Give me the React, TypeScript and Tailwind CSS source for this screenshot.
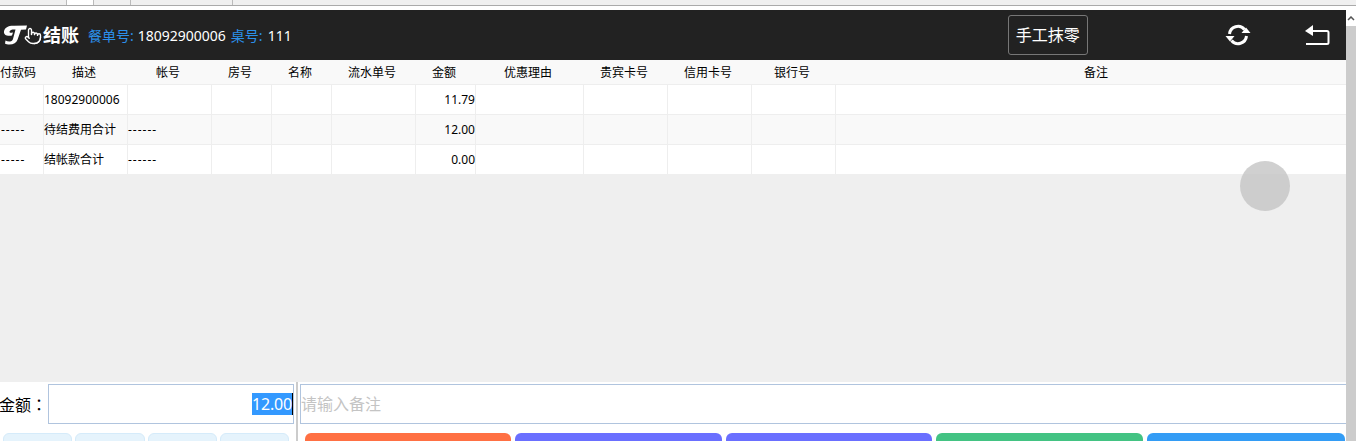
import { Pointer } from 'lucide-react'

const font = "font-['Noto_Sans','Noto_Sans_CJK_SC',sans-serif]"

const columns = [
    { title: '付款码', width: 'w-[44px]', head: 'pr-[8px]' },
    { title: '描述', width: 'w-[84px]', head: 'pr-[4px]' },
    { title: '帐号', width: 'w-[84px]', head: 'pr-[4px]' },
    { title: '房号', width: 'w-[60px]', head: 'pr-[4px]' },
    { title: '名称', width: 'w-[60px]', head: 'pr-[4px]' },
    { title: '流水单号', width: 'w-[84px]', head: 'pr-[4px]' },
    { title: '金额', width: 'w-[60px]', head: 'pr-[4px]' },
    { title: '优惠理由', width: 'w-[108px]', head: 'pr-[4px]' },
    { title: '贵宾卡号', width: 'w-[84px]', head: 'pr-[4px]' },
    { title: '信用卡号', width: 'w-[84px]', head: 'pr-[4px]' },
    { title: '银行号', width: 'w-[84px]', head: 'pr-[4px]' },
    { title: '备注', width: 'flex-1', head: 'pl-[10px]' },
]

const rows = [
    { cells: ['', '18092900006', '', '', '', '', '11.79'], bg: 'bg-white' },
    { cells: ['-----', '待结费用合计', '------', '', '', '', '12.00'], bg: 'bg-[#f9f9f9]' },
    { cells: ['-----', '结帐款合计', '------', '', '', '', '0.00'], bg: 'bg-white' },
]

const actionColors = [
    { color: 'bg-[#ff7043]', width: 'w-[206px]' },
    { color: 'bg-[#6a6fff]', width: 'w-[207px]' },
    { color: 'bg-[#6a6fff]', width: 'w-[206px]' },
    { color: 'bg-[#43c383]', width: 'w-[207px]' },
    { color: 'bg-[#339cf5]', width: 'w-[198px]' },
]

export default function App() {
    return (
        <div className={`relative h-[441px] w-[1356px] overflow-hidden bg-white ${font}`}>
            {/* browser tab strip */}
            <div className="flex h-[5px] bg-[#f0f0f0]">
                <div className="ml-[66px] w-[28px] border-x border-[#bbb] bg-white" />
                <div className="ml-[36px] w-[103px] border-x border-[#bbb]" />
            </div>
            <div className="h-[1px] bg-[#aaa]" />
            <div className="flex h-[435px]">
                <main className="flex w-[1346px] flex-col pt-[4px]">
                    <header className="flex h-[50px] shrink-0 items-center bg-[#222] text-white">
                        <svg width="24" height="20" viewBox="0 0 24 20" className="ml-[3px]" fill="white">
                            <path d="M1 6.500C1.500 2.500 6 .5 11 .8L24 .5l-1 4-5 .3-3.500 10c-1 3-4 4.700-8 4.700-2 0-3.500-.4-4.500-1l.5-3c1.500.8 3 1.200 4.500 1 1.500-.2 2.500-1 3-2.500L12.500 4.500c-3-.3-5.500.3-6 2-.2 1 .6 1.500 2 1.300l1.500-.3-1 3C4 11.300.5 10 1 6.500z" />
                        </svg>
                        <Pointer size={18} strokeWidth={1.800} className="-ml-[3px] mt-[1px]" />
                        <span className="ml-[1px] text-[18px] font-bold">结账</span>
                        <span className="ml-[9px] text-[14px] text-[#2b90ea]">餐单号:</span>
                        <span className="ml-[4px] text-[14px]">18092900006</span>
                        <span className="ml-[5px] text-[14px] text-[#2b90ea]">桌号:</span>
                        <span className="ml-[5px] text-[14px]">111</span>
                        <button className="ml-[716px] h-[40px] w-[80px] rounded-[3px] border border-[#777] text-[16px]">
                            手工抹零
                        </button>
                        <svg width="26" height="24" viewBox="0 0 26 24" className="ml-[137px]" fill="none" stroke="white" strokeWidth="3">
                            <path d="M4.500 11a8.500 8.500 0 0 1 15-4.500" />
                            <path d="M21.500 13a8.500 8.500 0 0 1-15 4.500" />
                            <path d="M16.500 10h9l-4.500-5.500z" fill="white" stroke="none" />
                            <path d="M.5 13h9l-4.500 5.500z" fill="white" stroke="none" />
                        </svg>
                        <svg width="26" height="22" viewBox="0 0 26 22" className="ml-[53px]" fill="none" stroke="white" strokeWidth="2">
                            <path d="M8 7h15a1.500 1.500 0 0 1 1.500 1.500v10a1.500 1.500 0 0 1-1.500 1.500H2" />
                            <path d="M1 7l8-6v11z" fill="white" stroke="none" />
                        </svg>
                    </header>
                    <div className="flex h-[24px] shrink-0 items-center bg-[#f9f9f9] pt-[2px] text-[12px] text-black">
                        {columns.map((col) => (
                            <div key={col.title} className={`${col.width} ${col.head} text-center`}>
                                {col.title}
                            </div>
                        ))}
                    </div>
                    {rows.map((row, i) => (
                        <div key={i} className={`flex h-[30px] shrink-0 border-t border-[#eee] text-[12px] text-black ${row.bg}`}>
                            {columns.map((col, j) => (
                                <div
                                    key={col.title}
                                    className={`flex items-center whitespace-nowrap ${col.width} ${
                                        j === 11 ? '' : 'border-r border-[#eee]'
                                    } ${j === 6 ? 'justify-end' : ''} ${j === 0 ? 'pl-[1px]' : ''} ${
                                        row.cells[j]?.startsWith('-') ? 'tracking-[1px]' : ''
                                    }`}
                                >
                                    {row.cells[j] ?? ''}
                                </div>
                            ))}
                        </div>
                    ))}
                    <div className="h-[208px] shrink-0 bg-[#efefef]" />
                    <div className="flex min-h-0 flex-1 bg-white">
                        <div className="w-[296px] shrink-0">
                            <div className="mt-[2px] flex h-[40px] items-center">
                                <span className="-ml-[1px] w-[49px] shrink-0 pt-[1px] text-[16px] text-black">
                                    金额<span className="font-['Noto_Sans_CJK_TC',sans-serif]">：</span>
                                </span>
                                <div className="flex h-[40px] w-[246px] items-center justify-end border border-[#b0c4de] text-[16px]">
                                    <span className="border-r border-black bg-[#3399ff] leading-[22px] tracking-[-0.2px] text-white">12.00</span>
                                </div>
                            </div>
                            <div className="mt-[9px] ml-[3px] flex gap-[3px]">
                                <div className="h-[40px] w-[69px] rounded-[6px] border border-[#d5ebfa] bg-[#e5f3fc]" />
                                <div className="h-[40px] w-[70px] rounded-[6px] border border-[#d5ebfa] bg-[#e5f3fc]" />
                                <div className="h-[40px] w-[69px] rounded-[6px] border border-[#d5ebfa] bg-[#e5f3fc]" />
                                <div className="h-[40px] w-[69px] rounded-[6px] border border-[#d5ebfa] bg-[#e5f3fc]" />
                            </div>
                        </div>
                        <div className="w-[2px] shrink-0 bg-[#ccc]" />
                        <div className="min-w-0 flex-1 pl-[2px]">
                            <input
                                placeholder="请输入备注"
                                className="mt-[2px] block h-[40px] w-full border border-r-0 border-[#b0c4de] text-[16px] outline-none placeholder:text-[#c4c4c4]"
                            />
                            <div className="mt-[9px] ml-[5px] flex gap-[4px]">
                                {actionColors.map((action, i) => (
                                    <div key={i} className={`h-[40px] rounded-[6px] ${action.width} ${action.color}`} />
                                ))}
                            </div>
                        </div>
                    </div>
                </main>
                {/* page scrollbar */}
                <div className="flex w-[10px] flex-col pt-[4px]">
                    <div className="flex h-[16px] items-center justify-center bg-white">
                        <svg width="8" height="5" viewBox="0 0 8 5" fill="none" stroke="#555" strokeWidth="1.500">
                            <path d="M1 4l3-3 3 3" />
                        </svg>
                    </div>
                    <div className="flex-1 bg-[#ccc]" />
                </div>
            </div>
            {/* floating ball */}
            <div className="absolute left-[1240px] top-[161px] h-[50px] w-[50px] rounded-full bg-[#c4c4c4]/80" />
        </div>
    )
}
